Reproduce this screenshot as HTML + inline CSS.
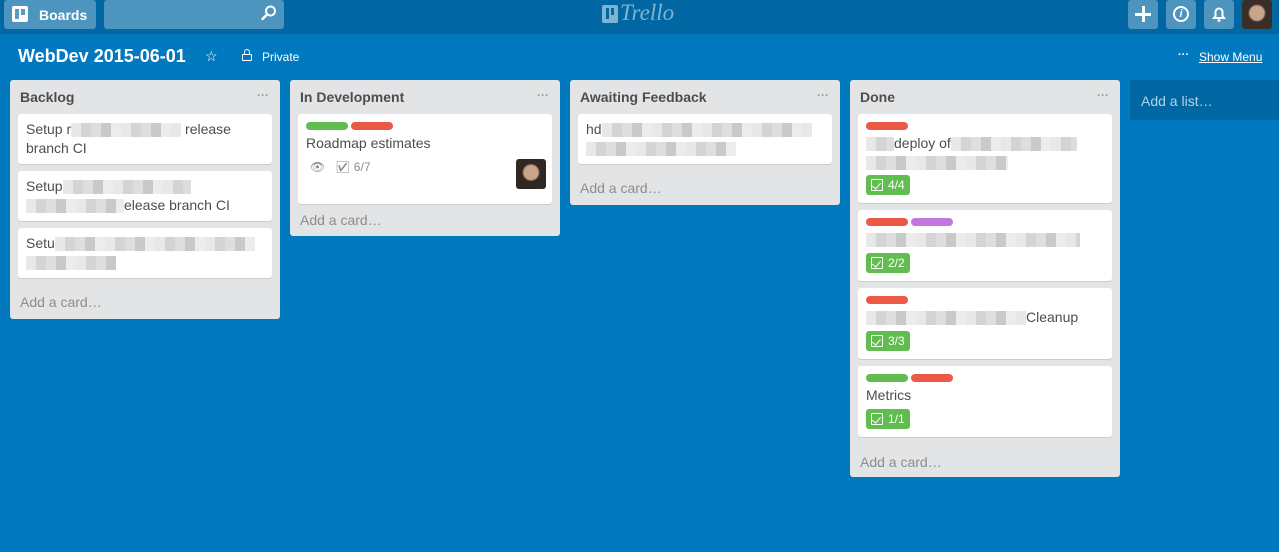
<!DOCTYPE html><html><head><meta charset="utf-8"><style>
*{box-sizing:border-box;margin:0;padding:0}
body{width:1279px;height:552px;background:#0079bf;font-family:"Liberation Sans",sans-serif;position:relative;overflow:hidden;color:#4d4d4d}
.a{position:absolute}
.hdr{left:0;top:0;width:1279px;height:34px;background:#0067a3}
.btn{background:rgba(255,255,255,.3);border-radius:3px}
.list{background:#e2e4e6;border-radius:3px;width:270px;top:80px}
.lt{position:absolute;left:10px;top:9px;font-weight:bold;font-size:14px;color:#4d4d4d}
.dots{position:absolute;right:11px;top:8px;font-size:12px;color:#999;letter-spacing:0;font-weight:bold}
.card{position:absolute;left:8px;width:254px;background:#fff;border-radius:3px;box-shadow:0 1px 0 #ccc;font-size:14px;color:#4d4d4d}
.add{position:absolute;left:10px;font-size:14px;color:#8c8c8c}
.labs{height:8px;line-height:8px;font-size:0}
.lab{display:inline-block;width:42px;height:8px;border-radius:4px;margin-right:3px;vertical-align:top}
.r{background:#eb5a46}.g{background:#61bd4f}.p{background:#c377e0}
.bz{display:inline-block;height:14px;vertical-align:middle;background:repeating-linear-gradient(90deg,#e8e8e8 0 10px,#d4d4d4 10px 20px,#dedede 20px 30px,#c9c9c9 30px 40px,#ececec 40px 50px)}
.badge{position:absolute;left:8px;height:20px;background:#61bd4f;border-radius:3px;color:#fff;font-size:12px;line-height:20px;padding:0 5px 0 22px}
.badge:before{content:"";position:absolute;left:5px;top:4px;width:10px;height:10px;border:1.5px solid #fff;border-radius:1px}
.badge:after{content:"";position:absolute;left:8px;top:6px;width:4px;height:7px;border:solid #fff;border-width:0 1.5px 1.5px 0;transform:rotate(40deg)}
.tx{margin-top:4px;line-height:19px}
</style></head><body>
<div class="a hdr"></div>
<div class="a btn" style="left:4px;top:0;width:92px;height:29px"></div>
<div class="a" style="left:12px;top:6px;width:16px;height:16px;background:#fff;border-radius:2px"></div>
<div class="a" style="left:15px;top:9px;width:4px;height:10px;background:#5a9bc5"></div>
<div class="a" style="left:21px;top:9px;width:4px;height:6px;background:#5a9bc5"></div>
<div class="a" style="left:39px;top:7px;color:#fff;font-weight:bold;font-size:14px">Boards</div>
<div class="a btn" style="left:104px;top:0;width:180px;height:29px"></div>
<svg class="a" style="left:260px;top:4px" width="18" height="18" viewBox="0 0 18 18"><circle cx="10.5" cy="7" r="4.5" fill="none" stroke="#fff" stroke-width="2"/><path d="M7 10.5L2.5 15" stroke="#fff" stroke-width="2.5" stroke-linecap="round"/></svg>
<div class="a" style="left:602px;top:5px;width:16px;height:18px;background:rgba(255,255,255,.5);border-radius:2px"></div>
<div class="a" style="left:606px;top:8px;width:3px;height:11px;background:#0067a3"></div>
<div class="a" style="left:611px;top:8px;width:3px;height:7px;background:#0067a3"></div>
<div class="a" style="left:620px;top:0px;color:rgba(255,255,255,.5);font-size:23px;font-style:italic;font-family:'Liberation Serif',serif">Trello</div>
<div class="a btn" style="left:1128px;top:0;width:30px;height:29px"></div>
<div class="a" style="left:1135px;top:13px;width:16px;height:2.5px;background:#fff"></div>
<div class="a" style="left:1142px;top:6px;width:2.5px;height:16px;background:#fff"></div>
<div class="a btn" style="left:1166px;top:0;width:30px;height:29px"></div>
<div class="a" style="left:1173px;top:6px;width:16px;height:16px;border:2px solid #fff;border-radius:50%;color:#fff;font-size:11px;font-weight:bold;font-style:italic;text-align:center;line-height:12px">i</div>
<div class="a btn" style="left:1204px;top:0;width:30px;height:29px"></div>
<svg class="a" style="left:1210px;top:5px" width="18" height="18" viewBox="0 0 18 18"><path d="M4 13h10l-1.5-2V7a3.5 3.5 0 0 0-7 0v4z" fill="none" stroke="#fff" stroke-width="2"/><circle cx="9" cy="15.5" r="1.5" fill="#fff"/></svg>
<div class="a" style="left:1242px;top:0;width:30px;height:29px;background:radial-gradient(circle at 50% 45%,#c9a58a 0 7px,#3a2f28 9px);border-radius:3px"></div>
<div class="a" style="left:18px;top:46px;color:#fff;font-weight:bold;font-size:18px">WebDev 2015-06-01</div>
<div class="a" style="left:205px;top:48px;color:#fff;font-size:14px">☆</div>
<div class="a" style="left:242px;top:54px;width:10px;height:7px;border:1.5px solid #fff;border-radius:1px"></div>
<div class="a" style="left:244px;top:49px;width:6px;height:6px;border:1.5px solid #fff;border-bottom:none;border-radius:3px 3px 0 0"></div>
<div class="a" style="left:262px;top:50px;color:#fff;font-size:12px">Private</div>
<div class="a" style="left:1178px;top:49px;color:#fff;font-size:11px;font-weight:bold">···</div>
<div class="a" style="left:1199px;top:50px;color:#fff;font-size:12px;text-decoration:underline">Show Menu</div>

<div class="a list" style="left:10px;height:239px"><div class="lt">Backlog</div><div class="dots">···</div>
<div class="card" style="top:34px;height:50px;padding:6px 8px;line-height:19px">Setup r<span class="bz" style="width:110px"></span> release<br>branch CI</div>
<div class="card" style="top:91px;height:50px;padding:6px 8px;line-height:19px">Setup<span class="bz" style="width:128px"></span><br><span class="bz" style="width:98px"></span>elease branch CI</div>
<div class="card" style="top:148px;height:50px;padding:6px 8px;line-height:19px">Setu<span class="bz" style="width:200px"></span><br><span class="bz" style="width:90px"></span></div>
<div class="add" style="top:214px">Add a card…</div></div>

<div class="a list" style="left:290px;height:156px"><div class="lt">In Development</div><div class="dots">···</div>
<div class="card" style="top:34px;height:90px;padding:8px 8px"><div class="labs"><span class="lab g"></span><span class="lab r"></span></div><div class="tx">Roadmap estimates</div>
<div style="position:absolute;left:12px;top:46px;font-size:12px;color:#8c8c8c">👁&nbsp;&nbsp;&nbsp;☑ 6/7</div>
<div style="position:absolute;right:6px;top:45px;width:30px;height:30px;border-radius:3px;background:radial-gradient(circle at 50% 45%,#c9a58a 0 7px,#2f2822 9px)"></div></div>
<div class="add" style="top:132px">Add a card…</div></div>

<div class="a list" style="left:570px;height:125px"><div class="lt">Awaiting Feedback</div><div class="dots">···</div>
<div class="card" style="top:34px;height:50px;padding:6px 8px;line-height:19px">hd<span class="bz" style="width:210px"></span><br><span class="bz" style="width:150px"></span></div>
<div class="add" style="top:100px">Add a card…</div></div>

<div class="a list" style="left:850px;height:397px"><div class="lt">Done</div><div class="dots">···</div>
<div class="card" style="top:34px;height:89px;padding:8px 8px"><div class="labs"><span class="lab r"></span></div><div class="tx"><span class="bz" style="width:28px"></span>deploy of<span class="bz" style="width:126px"></span><br><span class="bz" style="width:142px"></span></div><div class="badge" style="top:61px">4/4</div></div>
<div class="card" style="top:130px;height:71px;padding:8px 8px"><div class="labs"><span class="lab r"></span><span class="lab p"></span></div><div class="tx"><span class="bz" style="width:214px"></span></div><div class="badge" style="top:43px">2/2</div></div>
<div class="card" style="top:208px;height:71px;padding:8px 8px"><div class="labs"><span class="lab r"></span></div><div class="tx"><span class="bz" style="width:160px"></span>Cleanup</div><div class="badge" style="top:43px">3/3</div></div>
<div class="card" style="top:286px;height:71px;padding:8px 8px"><div class="labs"><span class="lab g"></span><span class="lab r"></span></div><div class="tx">Metrics</div><div class="badge" style="top:43px">1/1</div></div>
<div class="add" style="top:374px">Add a card…</div></div>

<div class="a" style="left:1130px;top:80px;width:149px;height:40px;background:#0067a3;border-radius:3px 0 0 3px"></div>
<div class="a" style="left:1141px;top:93px;color:rgba(255,255,255,.7);font-size:14px">Add a list…</div>
</body></html>
